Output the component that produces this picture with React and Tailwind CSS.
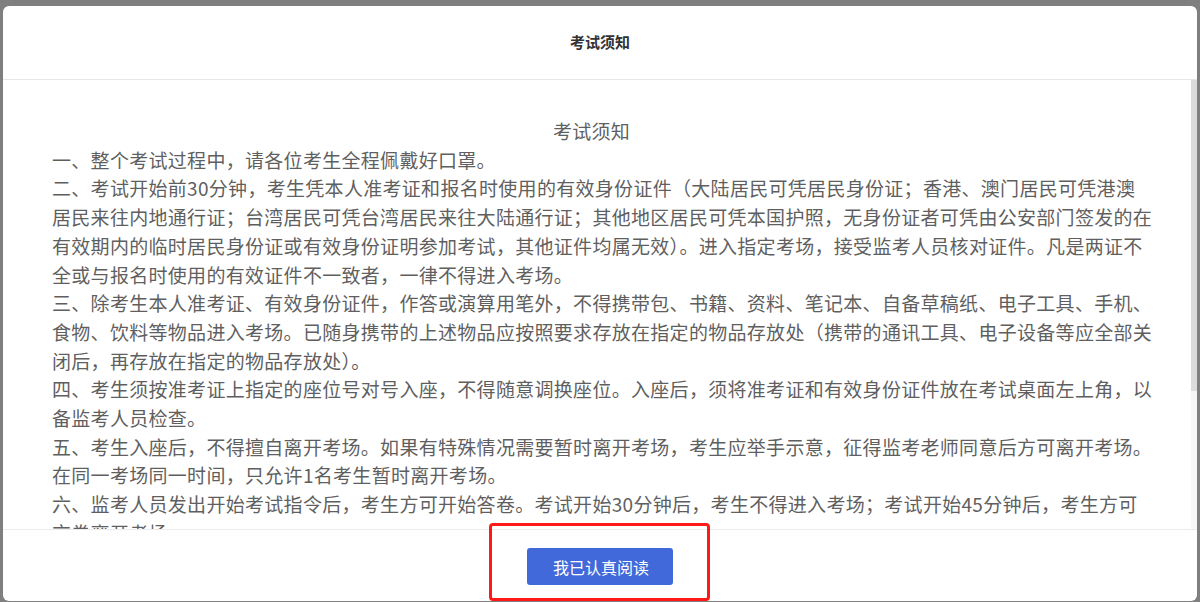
import React from "react";

// lines broken where the notice wraps in the original dialog
const lines = [
  "一、整个考试过程中，请各位考生全程佩戴好口罩。",
  "二、考试开始前30分钟，考生凭本人准考证和报名时使用的有效身份证件（大陆居民可凭居民身份证；香港、澳门居民可凭港澳",
  "居民来往内地通行证；台湾居民可凭台湾居民来往大陆通行证；其他地区居民可凭本国护照，无身份证者可凭由公安部门签发的在",
  "有效期内的临时居民身份证或有效身份证明参加考试，其他证件均属无效）。进入指定考场，接受监考人员核对证件。凡是两证不",
  "全或与报名时使用的有效证件不一致者，一律不得进入考场。",
  "三、除考生本人准考证、有效身份证件，作答或演算用笔外，不得携带包、书籍、资料、笔记本、自备草稿纸、电子工具、手机、",
  "食物、饮料等物品进入考场。已随身携带的上述物品应按照要求存放在指定的物品存放处（携带的通讯工具、电子设备等应全部关",
  "闭后，再存放在指定的物品存放处）。",
  "四、考生须按准考证上指定的座位号对号入座，不得随意调换座位。入座后，须将准考证和有效身份证件放在考试桌面左上角，以",
  "备监考人员检查。",
  "五、考生入座后，不得擅自离开考场。如果有特殊情况需要暂时离开考场，考生应举手示意，征得监考老师同意后方可离开考场。",
  "在同一考场同一时间，只允许1名考生暂时离开考场。",
  "六、监考人员发出开始考试指令后，考生方可开始答卷。考试开始30分钟后，考生不得进入考场；考试开始45分钟后，考生方可",
  "交卷离开考场。",
];

export default function App() {
  return (
    <div
      className="h-[602px] w-[1200px] overflow-hidden bg-[#7f7f7f] pt-[6px] pl-[3px] pr-[3px]"
      style={{ fontFamily: '"Microsoft YaHei", "Noto Sans CJK SC", "Noto Sans", sans-serif' }}
    >
      <div className="relative flex h-[595px] flex-col overflow-hidden rounded-md bg-white">
        {/* header */}
        <div className="flex h-[74px] shrink-0 items-center justify-center border-b border-[#e8e8e8]">
          <h1 className="text-[15px] font-bold text-[#333]">考试须知</h1>
        </div>

        {/* body */}
        <div className="relative min-h-0 flex-1 overflow-hidden">
          <div className="pt-[37px] pl-[49px] pr-[46px] text-[19px] leading-[28.7px] tracking-[0.3px] text-[#5f5f5f]">
            <p className="pr-[20px] text-center">考试须知</p>
            {lines.map((line, i) => (
              <p key={i} className="whitespace-nowrap">
                {line}
              </p>
            ))}
          </div>

          {/* scrollbar */}
          <div className="absolute right-0 top-0 bottom-0 w-[6px] bg-[#f7f7f7]">
            <div className="h-[311px] w-full bg-[#dcdcdc]" />
          </div>
        </div>

        {/* footer */}
        <div className="flex h-[72px] shrink-0 items-center justify-center border-t border-[#ececec] pt-[2px]">
          <button className="h-[37px] w-[146px] rounded-[3px] bg-[#4169d9] pl-[2px] text-[16px] text-white">
            我已认真阅读
          </button>
        </div>

        {/* annotation */}
        <div className="absolute left-[486px] top-[517px] h-[78px] w-[221px] rounded-[4px] border-[3px] border-[#ff1a1a]" />
      </div>
    </div>
  );
}
